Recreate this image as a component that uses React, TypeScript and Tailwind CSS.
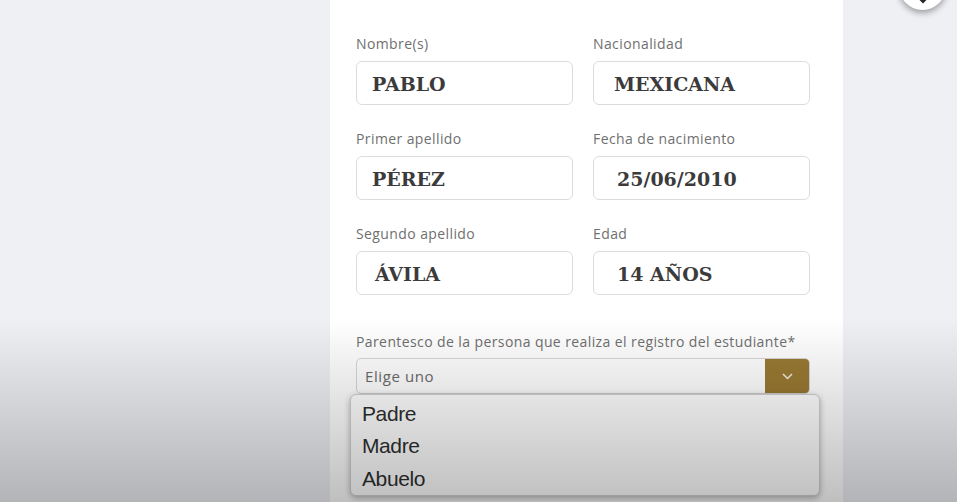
import React from "react";

const labelCls =
  "block text-[14px] leading-[16px] tracking-[0.4px] text-[#6f6f6f] [font-family:'Open_Sans','Noto_Sans',sans-serif]";
const boxCls =
  "h-[44px] mt-[9px] rounded-[6px] border border-[#dcdcdc] bg-white flex items-center";
const valCls =
  "text-[19px] font-bold text-[#3b3b3b] [font-family:'DejaVu_Serif',serif] pt-[2px]";

function Field({ label, value, indent }: { label: string; value: string; indent: string }) {
  return (
    <div>
      <label className={labelCls}>{label}</label>
      <div className={boxCls}>
        <span className={`${valCls} ${indent}`}>{value}</span>
      </div>
    </div>
  );
}

export default function App() {
  return (
    <div className="relative w-[957px] h-[502px] overflow-hidden bg-[#eff0f4]">
      <div className="ml-[330px] w-[513px] h-full bg-white pt-[36px] pl-[26px] pr-[33px] relative">
        <div className="grid grid-cols-2 gap-x-[20px] gap-y-[26px]">
          <Field label="Nombre(s)" value="PABLO" indent="pl-[15px]" />
          <Field label="Nacionalidad" value="MEXICANA" indent="pl-[20px]" />
          <Field label="Primer apellido" value="PÉREZ" indent="pl-[15px]" />
          <Field label="Fecha de nacimiento" value="25/06/2010" indent="pl-[23px]" />
          <Field label="Segundo apellido" value="ÁVILA" indent="pl-[18px]" />
          <Field label="Edad" value="14 AÑOS" indent="pl-[23px]" />
        </div>
        <div className="mt-[39px]">
          <label className={labelCls}>
            Parentesco de la persona que realiza el registro del estudiante*
          </label>
          <div className="mt-[8px] h-[36px] rounded-[5px] border border-[#d6d6d6] bg-white flex items-stretch overflow-hidden">
            <span className="flex-1 flex items-center pl-[8px] text-[15px] tracking-[0.6px] text-[#6a6a6a] [font-family:'Open_Sans','Noto_Sans',sans-serif]">
              Elige uno
            </span>
            <span className="w-[44px] bg-[#9a7a33] flex items-center justify-center">
              <svg width="11" height="7" viewBox="0 0 11 7" fill="none">
                <path d="M1 1l4.5 4.5L10 1" stroke="#f3efe6" strokeWidth="1.5" />
              </svg>
            </span>
          </div>
        </div>
        <div className="absolute left-[20px] top-[394px] w-[470px] h-[102px] rounded-[6px] bg-white border border-[#d0d0d0] shadow-[0_2px_6px_rgba(0,0,0,0.3)] pt-[2px] pl-[11px] flex flex-col">
          {["Padre", "Madre", "Abuelo"].map((o) => (
            <div
              key={o}
              className="h-[33px] flex items-center text-[21px] tracking-[-0.4px] text-[#2f2f2f] [font-family:'Liberation_Sans',Arial,sans-serif]"
            >
              {o}
            </div>
          ))}
        </div>
      </div>
      <div className="absolute left-[899px] top-[-37px] w-[47px] h-[47px] rounded-full bg-white shadow-[0_3px_6px_rgba(0,0,0,0.35)] flex items-end justify-center pb-[6px]">
        <svg width="10" height="6" viewBox="0 0 10 6">
          <path d="M1 0l4 4 4-4" stroke="#222" strokeWidth="2" fill="none" />
        </svg>
      </div>
      <div className="pointer-events-none absolute inset-x-0 top-[318px] bottom-0 bg-gradient-to-b from-transparent to-black/25" />
    </div>
  );
}
